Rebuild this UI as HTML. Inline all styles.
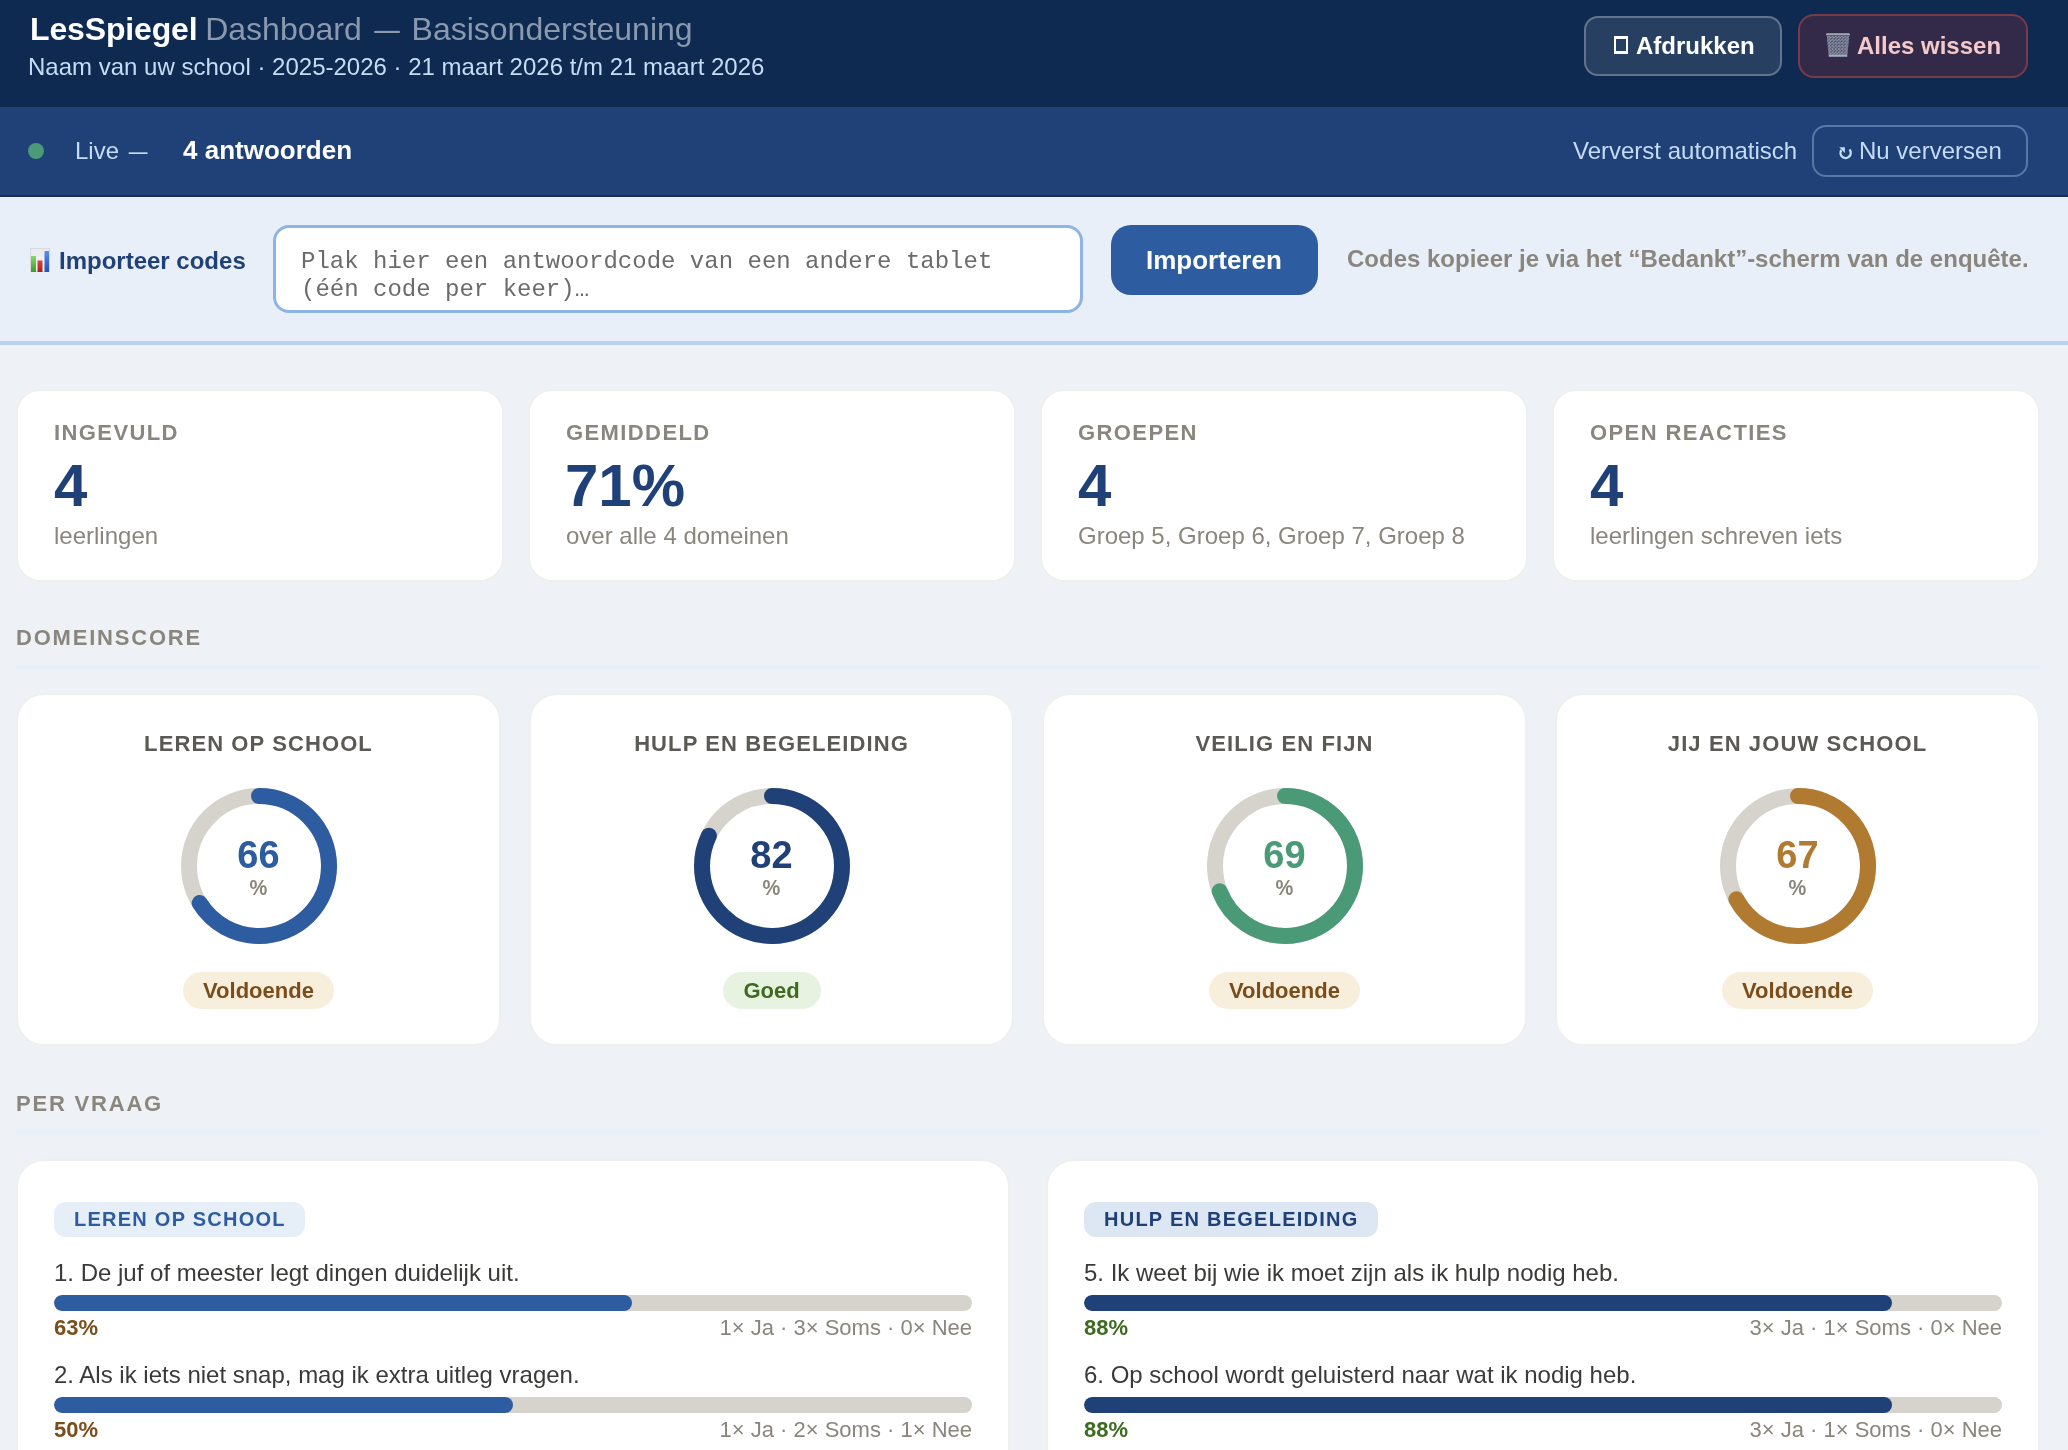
<!DOCTYPE html>
<html><head><meta charset="utf-8">
<style>
*{box-sizing:border-box;margin:0;padding:0}
html,body{width:2068px;height:1450px;overflow:hidden;background:#eef2f7;font-family:"Liberation Sans",sans-serif}
.a{position:absolute;white-space:nowrap;line-height:1}
.b{font-weight:bold}
#hdr{position:absolute;left:0;top:0;width:2068px;height:107px;background:#0f2a50}
#live{position:absolute;left:0;top:107px;width:2068px;height:90px;background:#1f4178;border-bottom:2px solid #142f5a}
#imp{position:absolute;left:0;top:197px;width:2068px;height:148px;background:#e8eff9;border-bottom:4px solid #b8d2ef}
.card{position:absolute;background:#fff;border:2px solid #efefee;border-radius:24px}
.lbl{font-size:22px;font-weight:bold;letter-spacing:1.4px;color:#8a867e}
.num{font-size:60px;font-weight:bold;color:#1f4178}
.sub{font-size:24px;color:#8a867e}
.sec{font-size:22px;font-weight:bold;letter-spacing:1.8px;color:#8a867e}
.rule{position:absolute;left:16px;width:2024px;height:4px;background:#e7eff9}
.dc{position:absolute;top:0;width:485px;height:353px}
.dt{position:absolute;left:0;width:100%;text-align:center;font-size:22px;font-weight:bold;letter-spacing:1.1px;color:#5a5955;line-height:1}
.ring{position:absolute;width:156px;height:156px}
.rn{position:absolute;left:0;width:100%;text-align:center;font-size:38px;font-weight:bold;line-height:1}
.rp{position:absolute;left:0;width:100%;text-align:center;font-size:20px;font-weight:bold;color:#8a867e;line-height:1;transform:scaleY(1.1);transform-origin:50% 4px}
.badge{position:absolute;height:37px;border-radius:19px;font-size:22px;font-weight:bold;line-height:37px;text-align:center}
.tag{position:absolute;height:35px;border-radius:12px;font-size:20px;font-weight:bold;letter-spacing:1.25px;line-height:35px;padding-left:20px}
.q{font-size:24px;color:#3a3a38}
.bar{position:absolute;height:16px;border-radius:8px;background:#d6d3cc;overflow:hidden}
.fill{position:absolute;left:0;top:0;height:16px;border-radius:8px}
.pct{font-size:22px;font-weight:bold}
.cnt{font-size:22px;color:#8a867e}
</style></head><body><div style="position:absolute;left:0;top:0;width:2068px;height:1450px;will-change:transform">

<div id="hdr"></div>
<div class="a b" style="left:30px;top:13px;font-size:32px;color:#fff;letter-spacing:-0.15px">LesSpiegel <span style="font-weight:normal;color:#8a99ae;margin-left:-1px;letter-spacing:0">Dashboard <span style="display:inline-block;transform:scaleX(0.8)">—</span> Basisondersteuning</span></div>
<div class="a" style="left:28px;top:55px;font-size:24px;color:#c5dcf5">Naam van uw school · 2025-2026 · 21 maart 2026 t/m 21 maart 2026</div>

<div style="position:absolute;left:1584px;top:16px;width:198px;height:60px;border:2px solid rgba(255,255,255,.28);background:rgba(255,255,255,.1);border-radius:14px"></div>
<div style="position:absolute;left:1614px;top:36px;width:14px;height:18px;border:3px solid #fff;border-left-width:2.7px;border-right-width:2.7px"></div>
<div class="a b" style="left:1636px;top:34px;font-size:24px;color:#fff">Afdrukken</div>

<div style="position:absolute;left:1798px;top:14px;width:230px;height:64px;border:2px solid #7b3a48;background:#332a4a;border-radius:16px"></div>
<svg style="position:absolute;left:1826px;top:33px" width="24" height="24" viewBox="0 0 24 24">
<defs><pattern id="mesh" width="3.2" height="3.2" patternUnits="userSpaceOnUse"><rect width="3.2" height="3.2" fill="#34364e"/><path d="M0 0L3.2 3.2M3.2 0L0 3.2" stroke="#8f95aa" stroke-width="1.0"/></pattern></defs>
<path d="M0.8 2.6 L23.2 2.6 L21.2 23.8 L2.8 23.8 Z" fill="url(#mesh)"/>
<path d="M0.8 2.6 L3.5 2.6 L4.6 23.8 L2.8 23.8 Z" fill="#7c8296" opacity="0.6"/>
<path d="M23.2 2.6 L20.5 2.6 L19.4 23.8 L21.2 23.8 Z" fill="#7c8296" opacity="0.6"/>
<rect x="0" y="0.2" width="24" height="2.4" rx="1.2" fill="#a3a9b5"/>
<rect x="0.6" y="2.3" width="22.8" height="0.7" fill="#4a5040"/>
<rect x="3" y="21.6" width="18" height="2" fill="#b4bfcc" opacity="0.75"/>
</svg>
<div class="a b" style="left:1857px;top:34px;font-size:24px;color:#f5c9c9">Alles wissen</div>

<div id="live"></div>
<div style="position:absolute;left:28px;top:143px;width:16px;height:16px;border-radius:50%;background:#4a9a78"></div>
<div class="a" style="left:75px;top:139px;font-size:24px;color:#c5dcf5">Live <span style="display:inline-block;transform:scaleX(0.78)">—</span></div>
<div class="a b" style="left:183px;top:137px;font-size:26px;color:#fff">4 antwoorden</div>
<div class="a" style="left:1573px;top:139px;font-size:24px;color:#c5dcf5">Ververst automatisch</div>
<div style="position:absolute;left:1812px;top:125px;width:216px;height:52px;border:2px solid rgba(197,220,245,.35);border-radius:14px"></div>
<svg style="position:absolute;left:1832px;top:138px" width="30" height="26" viewBox="0 0 30 26"><path d="M17.5 11.6 A5.1 5.1 0 1 1 9.4 12.0" fill="none" stroke="#c5dcf5" stroke-width="2.4"/><path d="M7.2 9.3 L12.9 9.3 L12.9 14.9 Z" fill="#c5dcf5"/></svg>
<div class="a" style="left:1859px;top:139px;font-size:24px;color:#c5dcf5">Nu verversen</div>

<div id="imp"></div>
<svg style="position:absolute;left:30px;top:248px" width="20" height="24" viewBox="0 0 20 24">
<defs><linearGradient id="cg" x1="0" y1="0" x2="0" y2="1"><stop offset="0" stop-color="#e9ebee"/><stop offset="1" stop-color="#f6f7f8"/></linearGradient></defs>
<rect x="0" y="0" width="20" height="24" fill="url(#cg)"/>
<linearGradient id="gg" x1="0" y1="0" x2="0" y2="1"><stop offset="0" stop-color="#8ad86e"/><stop offset="1" stop-color="#3a9a2e"/></linearGradient>
<linearGradient id="rg" x1="0" y1="0" x2="0" y2="1"><stop offset="0" stop-color="#e0463a"/><stop offset="1" stop-color="#a8201a"/></linearGradient>
<linearGradient id="bg2" x1="0" y1="0" x2="0" y2="1"><stop offset="0" stop-color="#5a8ef0"/><stop offset="1" stop-color="#2050c0"/></linearGradient>
<rect x="0.5" y="0.5" width="19" height="23" fill="none" stroke="#d8dadd" stroke-width="1"/>
<rect x="1" y="8" width="5" height="16" fill="url(#gg)"/>
<rect x="7.5" y="12.5" width="5" height="11.5" fill="url(#rg)"/>
<rect x="14.5" y="3" width="4.5" height="21" fill="url(#bg2)"/>
</svg>
<div class="a b" style="left:59px;top:249px;font-size:24px;color:#1f4178">Importeer codes</div>
<div style="position:absolute;left:273px;top:225px;width:810px;height:88px;border:3px solid #8cb4e6;border-radius:16px;background:#fff"></div>
<div class="a" style="left:301px;top:248px;font-size:24px;line-height:28px;color:#6b6b6b;font-family:'Liberation Mono',monospace;white-space:pre">Plak hier een antwoordcode van een andere tablet
(één code per keer)…</div>
<div style="position:absolute;left:1111px;top:225px;width:207px;height:70px;background:#2d5ca0;border-radius:20px"></div>
<div class="a b" style="left:1146px;top:247px;font-size:26px;color:#fff">Importeren</div>
<div class="a b" style="left:1347px;top:247px;font-size:24px;color:#8a867e">Codes kopieer je via het “Bedankt”-scherm van de enquête.</div>

<!-- stat cards -->
<div class="card" style="left:16px;top:389px;width:488px;height:193px"></div>
<div class="card" style="left:528px;top:389px;width:488px;height:193px"></div>
<div class="card" style="left:1040px;top:389px;width:488px;height:193px"></div>
<div class="card" style="left:1552px;top:389px;width:488px;height:193px"></div>

<div class="a lbl" style="left:54px;top:422px">INGEVULD</div>
<div class="a num" style="left:54px;top:456px">4</div>
<div class="a sub" style="left:54px;top:524px">leerlingen</div>

<div class="a lbl" style="left:566px;top:422px">GEMIDDELD</div>
<div class="a num" style="left:565px;top:456px">71%</div>
<div class="a sub" style="left:566px;top:524px">over alle 4 domeinen</div>

<div class="a lbl" style="left:1078px;top:422px">GROEPEN</div>
<div class="a num" style="left:1078px;top:456px">4</div>
<div class="a sub" style="left:1078px;top:524px">Groep 5, Groep 6, Groep 7, Groep 8</div>

<div class="a lbl" style="left:1590px;top:422px">OPEN REACTIES</div>
<div class="a num" style="left:1590px;top:456px">4</div>
<div class="a sub" style="left:1590px;top:524px">leerlingen schreven iets</div>

<div class="a sec" style="left:16px;top:627px">DOMEINSCORE</div>
<div class="rule" style="top:665px"></div>

<!-- domain cards -->
<div id="dcs" style="position:absolute;left:0;top:693px;width:2068px;height:360px">
<div class="card" style="left:16px;top:0;width:485px;height:353px;border-radius:28px">
<div class="dt" style="top:38px">LEREN OP SCHOOL</div>
<svg class="ring" style="left:162.5px;top:93px" width="156" height="156" viewBox="0 0 156 156">
<circle cx="78" cy="78" r="70" fill="none" stroke="#d6d3cc" stroke-width="16"/>
<circle cx="78" cy="78" r="70" fill="none" stroke="#2d5ca0" stroke-width="16" stroke-linecap="round" stroke-dasharray="290.28 439.82" transform="rotate(-90 78 78)"/>
</svg>
<div class="rn" style="top:141px;color:#2d5ca0">66</div>
<div class="rp" style="top:182px">%</div>
<div class="badge" style="left:165.0px;top:277px;width:151px;background:#f8eedc;color:#7a4d1a">Voldoende</div>
</div>
<div class="card" style="left:529px;top:0;width:485px;height:353px;border-radius:28px">
<div class="dt" style="top:38px">HULP EN BEGELEIDING</div>
<svg class="ring" style="left:162.5px;top:93px" width="156" height="156" viewBox="0 0 156 156">
<circle cx="78" cy="78" r="70" fill="none" stroke="#d6d3cc" stroke-width="16"/>
<circle cx="78" cy="78" r="70" fill="none" stroke="#1f4178" stroke-width="16" stroke-linecap="round" stroke-dasharray="360.65 439.82" transform="rotate(-90 78 78)"/>
</svg>
<div class="rn" style="top:141px;color:#1f4178">82</div>
<div class="rp" style="top:182px">%</div>
<div class="badge" style="left:191.5px;top:277px;width:98px;background:#e8f2e0;color:#3d6b1f">Goed</div>
</div>
<div class="card" style="left:1042px;top:0;width:485px;height:353px;border-radius:28px">
<div class="dt" style="top:38px">VEILIG EN FIJN</div>
<svg class="ring" style="left:162.5px;top:93px" width="156" height="156" viewBox="0 0 156 156">
<circle cx="78" cy="78" r="70" fill="none" stroke="#d6d3cc" stroke-width="16"/>
<circle cx="78" cy="78" r="70" fill="none" stroke="#4a9a78" stroke-width="16" stroke-linecap="round" stroke-dasharray="303.48 439.82" transform="rotate(-90 78 78)"/>
</svg>
<div class="rn" style="top:141px;color:#4a9a78">69</div>
<div class="rp" style="top:182px">%</div>
<div class="badge" style="left:165.0px;top:277px;width:151px;background:#f8eedc;color:#7a4d1a">Voldoende</div>
</div>
<div class="card" style="left:1555px;top:0;width:485px;height:353px;border-radius:28px">
<div class="dt" style="top:38px">JIJ EN JOUW SCHOOL</div>
<svg class="ring" style="left:162.5px;top:93px" width="156" height="156" viewBox="0 0 156 156">
<circle cx="78" cy="78" r="70" fill="none" stroke="#d6d3cc" stroke-width="16"/>
<circle cx="78" cy="78" r="70" fill="none" stroke="#b07a30" stroke-width="16" stroke-linecap="round" stroke-dasharray="294.68 439.82" transform="rotate(-90 78 78)"/>
</svg>
<div class="rn" style="top:141px;color:#b07a30">67</div>
<div class="rp" style="top:182px">%</div>
<div class="badge" style="left:165.0px;top:277px;width:151px;background:#f8eedc;color:#7a4d1a">Voldoende</div>
</div>
</div>

<div class="a sec" style="left:16px;top:1093px">PER VRAAG</div>
<div class="rule" style="top:1130px"></div>

<div class="card" style="left:16px;top:1159px;width:994px;height:400px;border-radius:28px"></div>
<div class="card" style="left:1046px;top:1159px;width:994px;height:400px;border-radius:28px"></div>

<div class="tag" style="left:54px;top:1202px;width:251px;background:#e6eef8;color:#2d5ca0">LEREN OP SCHOOL</div>
<div class="a q" style="left:54px;top:1261px">1. De juf of meester legt dingen duidelijk uit.</div>
<div class="bar" style="left:54px;top:1295px;width:918px"><div class="fill" style="width:578.3px;background:#2d5ca0"></div></div>
<div class="a pct" style="left:54px;top:1317px;color:#7a4d1a">63%</div>
<div class="a cnt" style="left:54px;width:918px;text-align:right;top:1317px">1× Ja · 3× Soms · 0× Nee</div>
<div class="a q" style="left:54px;top:1363px">2. Als ik iets niet snap, mag ik extra uitleg vragen.</div>
<div class="bar" style="left:54px;top:1397px;width:918px"><div class="fill" style="width:459.0px;background:#2d5ca0"></div></div>
<div class="a pct" style="left:54px;top:1419px;color:#7a4d1a">50%</div>
<div class="a cnt" style="left:54px;width:918px;text-align:right;top:1419px">1× Ja · 2× Soms · 1× Nee</div>
<div class="tag" style="left:1084px;top:1202px;width:294px;background:#dde7f3;color:#1f4178">HULP EN BEGELEIDING</div>
<div class="a q" style="left:1084px;top:1261px">5. Ik weet bij wie ik moet zijn als ik hulp nodig heb.</div>
<div class="bar" style="left:1084px;top:1295px;width:918px"><div class="fill" style="width:807.8px;background:#1f4178"></div></div>
<div class="a pct" style="left:1084px;top:1317px;color:#3d6b1f">88%</div>
<div class="a cnt" style="left:1084px;width:918px;text-align:right;top:1317px">3× Ja · 1× Soms · 0× Nee</div>
<div class="a q" style="left:1084px;top:1363px">6. Op school wordt geluisterd naar wat ik nodig heb.</div>
<div class="bar" style="left:1084px;top:1397px;width:918px"><div class="fill" style="width:807.8px;background:#1f4178"></div></div>
<div class="a pct" style="left:1084px;top:1419px;color:#3d6b1f">88%</div>
<div class="a cnt" style="left:1084px;width:918px;text-align:right;top:1419px">3× Ja · 1× Soms · 0× Nee</div>
</div></body></html>
